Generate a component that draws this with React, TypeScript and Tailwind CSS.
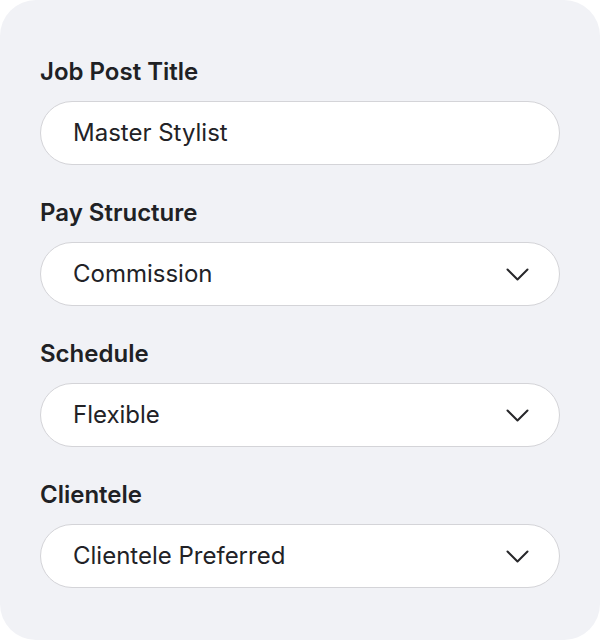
import React from "react";

const Chevron = () => (
  <svg width="23" height="13" viewBox="0 0 23 13" fill="none" stroke="#27272a" strokeWidth="2" strokeLinecap="round" strokeLinejoin="round">
    <path d="M1.5 1.5l10 10 10-10" />
  </svg>
);

function Field({ label, value, select }: { label: string; value: string; select?: boolean }) {
  return (
    <div className="flex flex-col">
      <div className="text-[24px] leading-[28px] font-semibold text-[#202124] mb-[15px]">{label}</div>
      <div className="h-[64px] rounded-full bg-white border border-[#d4d4d8] flex items-center justify-between pl-[32px] pr-[30px]">
        <span className="text-[24px] text-[#222226]">{value}</span>
        {select && <Chevron />}
      </div>
    </div>
  );
}

export default function App() {
  return (
    <div className="w-[600px] h-[640px] bg-white" style={{ fontFamily: "Inter, 'Noto Sans', sans-serif" }}>
      <div className="w-full h-full bg-[#f1f2f6] rounded-[36px] px-[40px] pt-[58px] flex flex-col gap-[34px]">
        <Field label="Job Post Title" value="Master Stylist" />
        <Field label="Pay Structure" value="Commission" select />
        <Field label="Schedule" value="Flexible" select />
        <Field label="Clientele" value="Clientele Preferred" select />
      </div>
    </div>
  );
}
